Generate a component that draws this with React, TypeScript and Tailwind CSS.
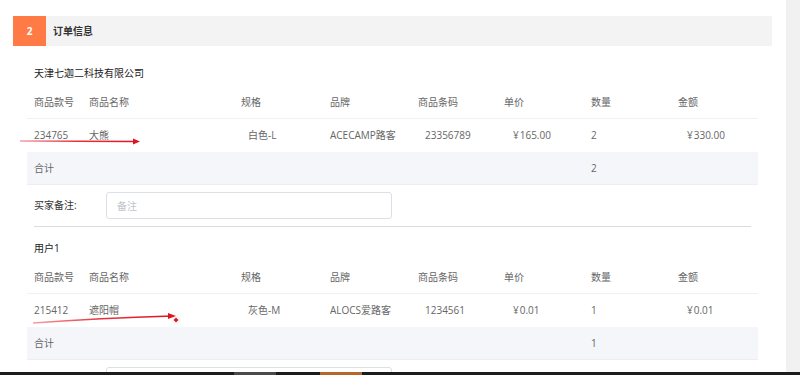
import React from 'react';

type Item = {
    code: string;
    name: string;
    spec: string;
    brand: string;
    barcode: string;
    price: string;
    qty: string;
    amount: string;
};

const cols = 'grid grid-cols-[55px_152px_89px_88px_86px_87px_87px_87px]';

const heads = ['商品款号', '商品名称', '规格', '品牌', '商品条码', '单价', '数量', '金额'];

function Shop({ title, item }: { title: string; item: Item }) {
    return (
        <div>
            <div className="mt-[15px] h-[24px] leading-[24px] px-[7px] text-[10px] text-[#222]">{title}</div>
            <div className={`${cols} h-[34px] items-center pt-[2px] border-b border-[#f0f1f5] text-[10px] text-[#666]`}>
                {heads.map((h) => (
                    <div key={h} className="px-[7px]">{h}</div>
                ))}
            </div>
            <div className={`${cols} h-[33px] items-center text-[10px] text-[#666]`}>
                <div className="px-[7px]">{item.code}</div>
                <div className="px-[7px]">{item.name}</div>
                <div className="pl-[14px]">{item.spec}</div>
                <div className="px-[7px]">{item.brand}</div>
                <div className="pl-[14px]">{item.barcode}</div>
                <div className="pl-[16px]">{item.price}</div>
                <div className="px-[7px]">{item.qty}</div>
                <div className="pl-[16px]">{item.amount}</div>
            </div>
            <div className={`${cols} h-[33px] items-center bg-[#f5f6fa] border-b border-[#eceef3] text-[10px] text-[#666]`}>
                <div className="px-[7px] col-span-6">合计</div>
                <div className="px-[7px]">{item.qty}</div>
                <div></div>
            </div>
            <div className="flex items-center mt-[7px] px-[7px]">
                <span className="w-[72px] text-[10px] text-[#333]">买家备注:</span>
                <input
                    placeholder="备注"
                    className="w-[286px] h-[27px] rounded-[3px] border border-[#dcdfe6] px-[10px] text-[10px] placeholder:text-[#c0c4cc] outline-none"
                />
            </div>
            <div className="mt-[7px] mx-[7px] border-t border-[#dcdcdc]"></div>
        </div>
    );
}

export default function App() {
    return (
        <div
            className="h-[375px] overflow-hidden flex flex-col bg-white"
            style={{ fontFamily: '"Open Sans", "Noto Sans CJK SC", sans-serif' }}
        >
            <div className="flex flex-1 min-h-0">
                <div className="relative w-[786px] overflow-hidden">
                    <div className="ml-[13px] mr-[14px] mt-[16px] h-[30px] flex bg-[#f3f3f3]">
                        <div className="w-[33px] bg-[#ff7a45] text-white text-[10px] font-bold flex items-center justify-center">2</div>
                        <div className="pl-[7px] flex items-center text-[10px] font-bold text-[#333]">订单信息</div>
                    </div>
                    <div className="ml-[27px] w-[731px]">
                        <Shop
                            title="天津七迦二科技有限公司"
                            item={{ code: '234765', name: '大熊', spec: '白色-L', brand: 'ACECAMP路客', barcode: '23356789', price: '¥\u200a165.00', qty: '2', amount: '¥\u200a330.00' }}
                        />
                        <div className="-mt-[6px]">
                            <Shop
                                title="用户1"
                                item={{ code: '215412', name: '遮阳帽', spec: '灰色-M', brand: 'ALOCS爱路客', barcode: '1234561', price: '¥\u200a0.01', qty: '1', amount: '¥\u200a0.01' }}
                            />
                        </div>
                    </div>
                    {/* hand drawn annotation arrows */}
                    <svg className="absolute left-0 top-0 pointer-events-none" width="786" height="372">
                        <defs>
                            <linearGradient id="ar1" x1="0" x2="1" y1="0" y2="0">
                                <stop offset="0" stopColor="#f4a0a8" />
                                <stop offset="0.5" stopColor="#e8303a" />
                                <stop offset="1" stopColor="#e0141e" />
                            </linearGradient>
                        </defs>
                        <path d="M20 141 L136 141.5" stroke="url(#ar1)" strokeWidth="1.6" fill="none" />
                        <path d="M133 138.5 L140 141.5 L133 144.5 Z" fill="#e0141e" />
                        <path d="M33 323 Q100 318 172 316" stroke="url(#ar1)" strokeWidth="1.5" fill="none" />
                        <path d="M168 313 L176 316 L168 319 Z" fill="#e0141e" />
                        <path d="M176 317.5 L178.5 320 L176 322.5 L173.5 320 Z" fill="#e0141e" />
                    </svg>
                </div>
                <div className="flex-1 bg-[#f1f1f1]"></div>
            </div>
            <div className="h-[3px] flex bg-[#1c1c1c]">
                <div className="w-[234px]"></div>
                <div className="w-[42px] bg-[#4a4a4a]"></div>
                <div className="w-[44px]"></div>
                <div className="w-[42px] bg-[#b8662a]"></div>
            </div>
        </div>
    );
}
